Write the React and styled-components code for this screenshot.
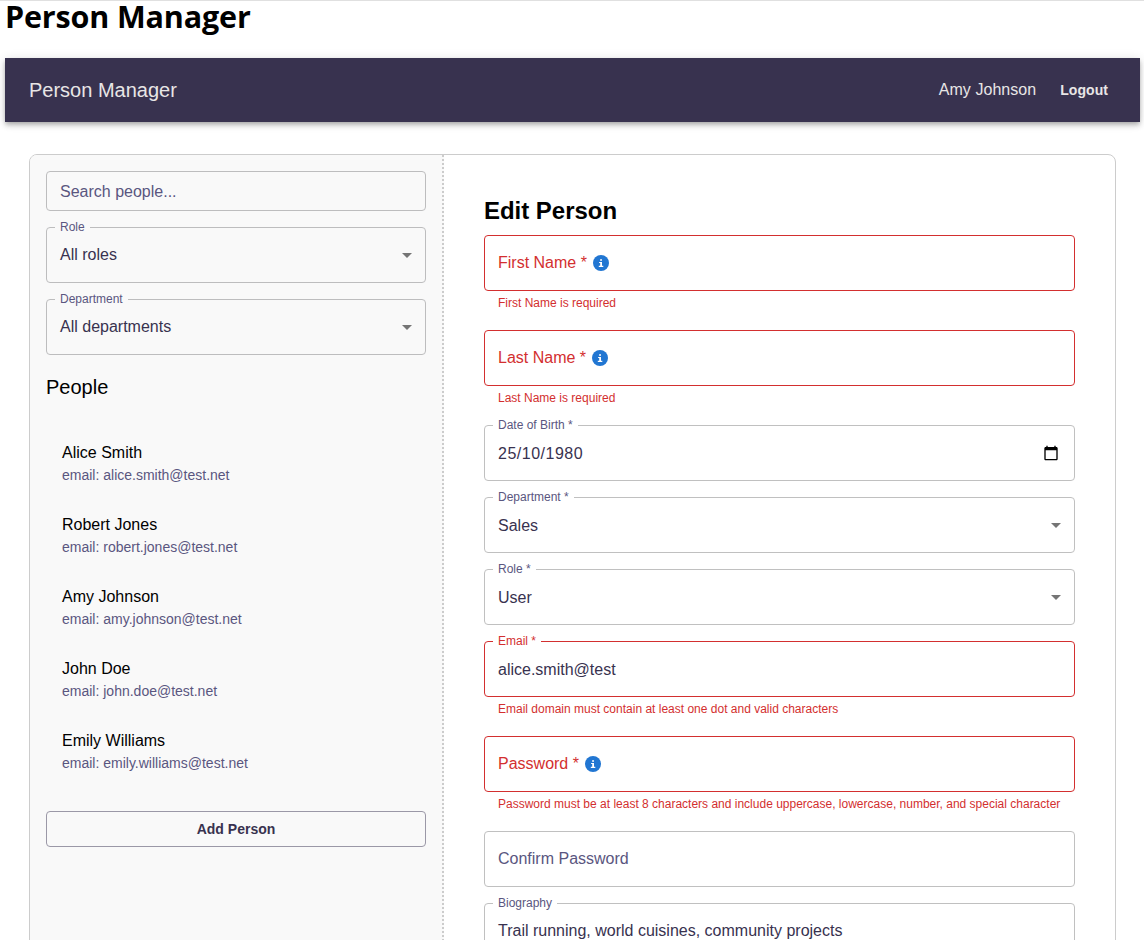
import React from "react";
import styled, { createGlobalStyle } from "styled-components";

const GlobalStyle = createGlobalStyle`
  *, *::before, *::after { box-sizing: border-box; }
  body {
    margin: 0;
    background: #fff;
    color: #000;
    font-family: Arial, "Liberation Sans", sans-serif;
    font-size: 16px;
  }
`;

const Page = styled.div`
  height: 940px;
  overflow: hidden;
  display: flex;
  flex-direction: column;
  border-top: 1px solid #e0e0e0;
`;

const PageTitle = styled.h1`
  margin: 0;
  height: 57px;
  padding-left: 5px;
  flex: none;
  font-family: "Segoe UI", "Open Sans", "Noto Sans", sans-serif;
  font-size: 30.5px;
  font-weight: 700;
  line-height: 30px;
  letter-spacing: -0.15px;
  white-space: nowrap;
`;

const AppBar = styled.header`
  flex: none;
  display: flex;
  align-items: center;
  height: 64px;
  margin: 0 4px 0 5px;
  padding: 0 24px;
  background: #38324f;
  color: #e8e6e6;
  box-shadow: 0 2px 4px -1px rgba(0, 0, 0, 0.2), 0 4px 5px rgba(0, 0, 0, 0.14),
    0 1px 10px rgba(0, 0, 0, 0.12);
`;

const Brand = styled.div`
  flex: 1;
  font-size: 20px;
  line-height: 32px;
`;

const UserName = styled.span`
  font-size: 16px;
  line-height: 24px;
  letter-spacing: 0.05px;
  margin-right: 16px;
`;

const LogoutButton = styled.button`
  border: 0;
  background: none;
  color: inherit;
  padding: 6px 8px;
  font: 700 14px/24.5px Arial, "Liberation Sans", sans-serif;
  letter-spacing: 0.05px;
`;

const Panel = styled.main`
  flex: none;
  display: flex;
  height: 900px;
  margin: 32px 28px 0 29px;
  border: 1px solid #ccc;
  border-radius: 8px;
  overflow: hidden;
`;

const Sidebar = styled.aside`
  flex: none;
  display: flex;
  flex-direction: column;
  gap: 16px;
  width: 414px;
  padding: 16px;
  background: #f9f9f9;
  border-right: 2px dotted #ccc;
`;

const Form = styled.form`
  flex: 1;
  min-width: 0;
  display: flex;
  flex-direction: column;
  gap: 16px;
  padding: 40px;
`;

const FormTitle = styled.h2`
  margin: 0 0 -16px;
  height: 40px;
  font-size: 24px;
  line-height: 32px;
  letter-spacing: -0.03px;
`;

const Outline = styled.div`
  position: relative;
  display: flex;
  align-items: center;
  height: ${(p) => (p.$small ? 40 : 56)}px;
  padding: 0 13px ${(p) => (p.$small ? 0 : 2)}px;
  border: 1px solid ${(p) => (p.$error ? "#d32f2f" : p.$tinted ? "#bdbdbe" : "#c0c0c0")};
  border-radius: 4px;
  background: ${(p) => (p.$tinted ? "#f9f9f9" : "#fff")};
`;

const FloatingLabel = styled.label`
  position: absolute;
  top: -9px;
  left: 8px;
  padding: 0 5px;
  background: ${(p) => (p.$tinted ? "#f9f9f9" : "#fff")};
  color: ${(p) => (p.$error ? "#d32f2f" : "#5a5680")};
  font-size: 12px;
  line-height: 17px;
  white-space: nowrap;
`;

const RestingLabel = styled.label`
  display: flex;
  align-items: center;
  gap: 6px;
  color: ${(p) => (p.$error ? "#d32f2f" : "#5a5680")};
  line-height: 23px;
`;

const Value = styled.span`
  flex: 1;
  padding-top: ${(p) => (p.$lowered ? 2 : 0)}px;
  color: #38324f;
  line-height: 23px;
  letter-spacing: ${(p) => p.$spacing || "0"};
`;

const HelperText = styled.p`
  margin: 2px 14px 0;
  padding-bottom: 1px;
  color: #d32f2f;
  font-size: 12px;
  line-height: 20px;
  white-space: nowrap;
`;

const InfoSvg = styled.svg`
  flex: none;
  width: 16px;
  height: 16px;
  margin-top: 2px;
`;

const ArrowSvg = styled.svg`
  flex: none;
  width: 24px;
  height: 24px;
  margin: 2px -7px 0 0;
  fill: #757575;
`;

const CalendarSvg = styled.svg`
  flex: none;
  width: 16px;
  height: 16px;
  margin: 1px 2px 0 0;
`;

const ListTitle = styled.h3`
  margin: 0;
  font-size: 20px;
  font-weight: 400;
  line-height: 32px;
`;

const PeopleList = styled.ul`
  margin: 0;
  padding: 8px 0;
  list-style: none;
`;

const PersonItem = styled.li`
  height: 72px;
  padding: 14px 16px 0;
`;

const PersonName = styled.div`
  line-height: 23px;
`;

const PersonEmail = styled.div`
  color: #5a5680;
  font-size: 14px;
  line-height: 23px;
`;

const AddButton = styled.button`
  height: 36px;
  border: 1px solid #9b98a7;
  border-radius: 4px;
  background: none;
  color: #38324f;
  font: 700 14px/24px Arial, "Liberation Sans", sans-serif;
`;

const Info = () => (
  <InfoSvg viewBox="0 0 16 16">
    <circle cx="8" cy="8" r="8" fill="#2176d2" />
    <path d="M7.1 4.3h1.9v1.5H7.1zM6.1 6.9H9v3.9h1.3V12H5.8v-1.2h1.4V8.1H6.1z" fill="#fff" />
  </InfoSvg>
);

const Arrow = () => (
  <ArrowSvg viewBox="0 0 24 24">
    <path d="m7 10 5 5 5-5z" />
  </ArrowSvg>
);

const Calendar = () => (
  <CalendarSvg viewBox="0 0 24 24">
    <path d="M20 3h-1V1h-2v2H7V1H5v2H4c-1.1 0-2 .9-2 2v16c0 1.1.9 2 2 2h16c1.1 0 2-.9 2-2V5c0-1.1-.9-2-2-2zm0 18H4V8h16v13z" />
  </CalendarSvg>
);

function Field({ label, value, helper, error, info, icon, small, tinted, lowered, spacing }) {
  return (
    <div>
      <Outline $error={error} $small={small} $tinted={tinted}>
        {value ? (
          <>
            <FloatingLabel $error={error} $tinted={tinted}>{label}</FloatingLabel>
            <Value $spacing={spacing} $lowered={lowered}>{value}</Value>
          </>
        ) : (
          <RestingLabel $error={error}>
            {label}
            {info && <Info />}
          </RestingLabel>
        )}
        {icon}
      </Outline>
      {helper && <HelperText>{helper}</HelperText>}
    </div>
  );
}

const people = [
  ["Alice Smith", "alice.smith@test.net"],
  ["Robert Jones", "robert.jones@test.net"],
  ["Amy Johnson", "amy.johnson@test.net"],
  ["John Doe", "john.doe@test.net"],
  ["Emily Williams", "emily.williams@test.net"],
];

export default function App() {
  return (
    <Page>
      <GlobalStyle />
      <PageTitle>Person Manager</PageTitle>
      <AppBar>
        <Brand>Person Manager</Brand>
        <UserName>Amy Johnson</UserName>
        <LogoutButton>Logout</LogoutButton>
      </AppBar>
      <Panel>
        <Sidebar>
          <Field label="Search people..." small tinted />
          <Field label="Role" value="All roles" icon={<Arrow />} tinted />
          <Field label="Department" value="All departments" icon={<Arrow />} tinted />
          <ListTitle>People</ListTitle>
          <PeopleList>
            {people.map(([name, email]) => (
              <PersonItem key={email}>
                <PersonName>{name}</PersonName>
                <PersonEmail>email: {email}</PersonEmail>
              </PersonItem>
            ))}
          </PeopleList>
          <AddButton>Add Person</AddButton>
        </Sidebar>
        <Form>
          <FormTitle>Edit Person</FormTitle>
          <Field label="First Name *" error info helper="First Name is required" />
          <Field label="Last Name *" error info helper="Last Name is required" />
          <Field label="Date of Birth *" value="25/10/1980" spacing="0.5px" lowered icon={<Calendar />} />
          <Field label="Department *" value="Sales" lowered icon={<Arrow />} />
          <Field label="Role *" value="User" lowered icon={<Arrow />} />
          <Field
            label="Email *"
            value="alice.smith@test"
            lowered
            error
            helper="Email domain must contain at least one dot and valid characters"
          />
          <Field
            label="Password *"
            error
            info
            helper="Password must be at least 8 characters and include uppercase, lowercase, number, and special character"
          />
          <Field label="Confirm Password" />
          <Field label="Biography" value="Trail running, world cuisines, community projects" />
        </Form>
      </Panel>
    </Page>
  );
}
